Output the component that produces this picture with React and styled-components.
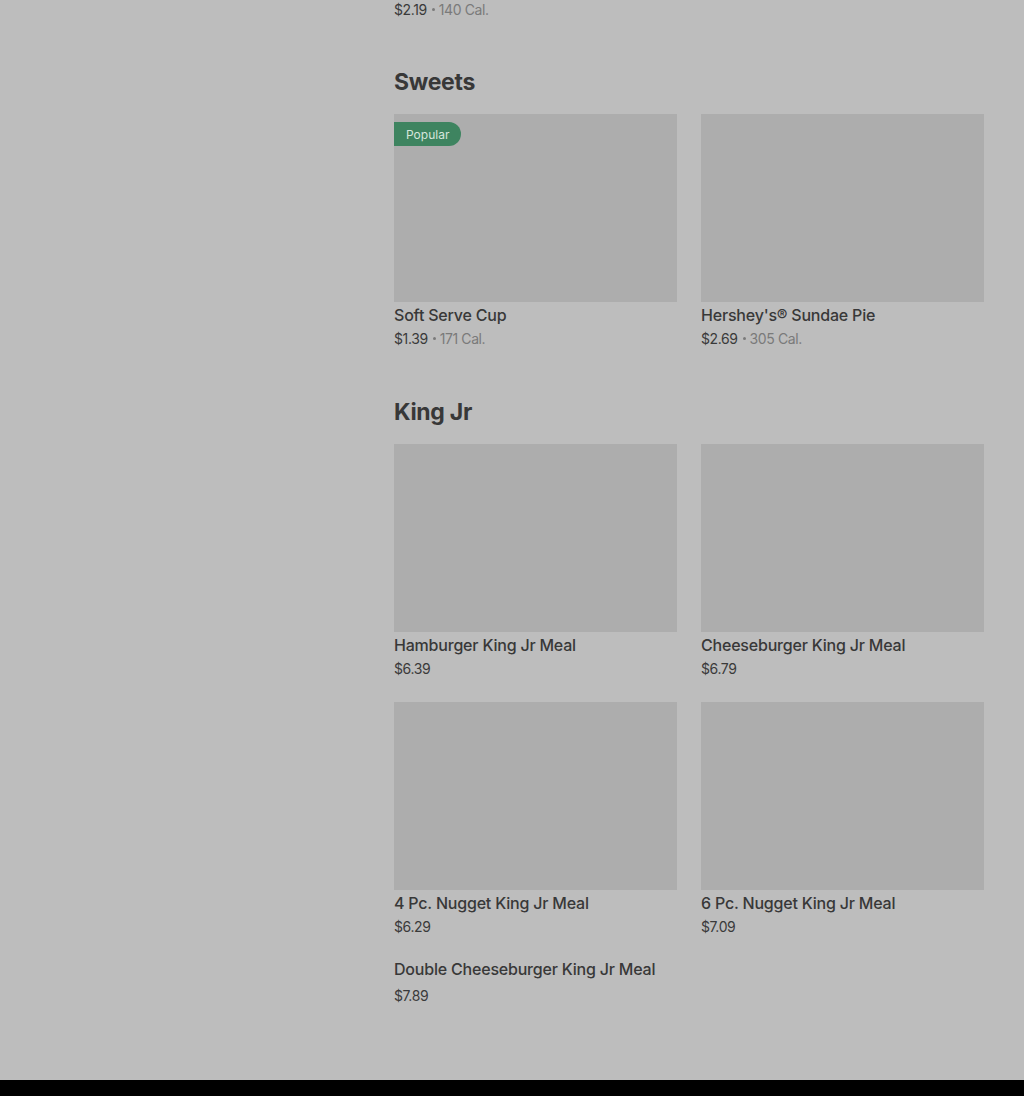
import React from "react";
import styled, { createGlobalStyle } from "styled-components";

const GlobalStyle = createGlobalStyle`
  html, body {
    margin: 0;
    padding: 0;
    background-color: #bdbdbd;
    font-family: "Inter", "Liberation Sans", sans-serif;
    color: #393939;
  }
  * {
    box-sizing: border-box;
  }
`;

const Page = styled.div`
  display: flex;
  flex-direction: column;
  min-height: 100vh;
  overflow: hidden;
`;

const Main = styled.div`
  display: grid;
  grid-template-columns: 394px 590px;
  padding-bottom: 73px;
`;

const Sidebar = styled.div``;

const Content = styled.div`
  display: flex;
  flex-direction: column;
  margin-top: -2px;
`;

const Section = styled.section`
  display: flex;
  flex-direction: column;
  margin-top: 45px;

  & + & {
    margin-top: 46px;
  }
`;

const Heading = styled.h2`
  margin: 0 0 16px 0;
  font-size: 23px;
  line-height: 32px;
  font-weight: 700;
  letter-spacing: -0.3px;
  color: #383838;
`;

const Grid = styled.div`
  display: grid;
  grid-template-columns: 283px 283px;
  column-gap: 24px;
  row-gap: 22px;
`;

const Card = styled.div`
  display: flex;
  flex-direction: column;
`;

const Image = styled.div`
  position: relative;
  height: 188px;
  background-color: #adadad;
`;

const Badge = styled.span`
  position: absolute;
  top: 8px;
  left: 0;
  height: 24px;
  padding: 0 12px;
  display: flex;
  align-items: center;
  border-radius: 0 12px 12px 0;
  background-color: #3e8460;
  color: #d6e6dc;
  font-size: 12px;
  font-weight: 400;
`;

const Title = styled.div`
  font-size: 16px;
  line-height: 24px;
  font-weight: 500;
  letter-spacing: -0.2px;
  color: #383838;
  margin-top: ${(p) => (p.$bare ? "-3px" : "1px")};
`;

const Meta = styled.div`
  font-size: 14px;
  line-height: 23px;
  letter-spacing: -0.4px;
  color: #3a3a3a;
  margin-top: ${(p) => (p.$bare ? "3px" : "0")};
`;

const Cal = styled.span`
  color: #7a7a7a;
`;

const Dot = styled.span`
  display: inline-block;
  width: 3px;
  height: 3px;
  margin: 0 4px 0 5px;
  border-radius: 50%;
  background-color: #7a7a7a;
  vertical-align: 4px;
`;

const Footer = styled.div`
  height: 24px;
  background-color: #000;
`;

const sections = [
  {
    name: "Sweets",
    items: [
      { title: "Soft Serve Cup", price: "$1.39", cal: "171 Cal.", popular: true },
      { title: "Hershey's® Sundae Pie", price: "$2.69", cal: "305 Cal." },
    ],
  },
  {
    name: "King Jr",
    items: [
      { title: "Hamburger King Jr Meal", price: "$6.39" },
      { title: "Cheeseburger King Jr Meal", price: "$6.79" },
      { title: "4 Pc. Nugget King Jr Meal", price: "$6.29" },
      { title: "6 Pc. Nugget King Jr Meal", price: "$7.09" },
      { title: "Double Cheeseburger King Jr Meal", price: "$7.89", bare: true },
    ],
  },
];

const Price = ({ price, cal, bare }) => (
  <Meta $bare={bare}>
    {price}
    {cal && (
      <>
        <Dot />
        <Cal>{cal}</Cal>
      </>
    )}
  </Meta>
);

const App = () => {
  return (
    <Page>
      <GlobalStyle />
      <Main>
        <Sidebar />
        <Content>
          <Price price="$2.19" cal="140 Cal." />
          {sections.map((s) => (
            <Section key={s.name}>
              <Heading>{s.name}</Heading>
              <Grid>
                {s.items.map((item) => (
                  <Card key={item.title}>
                    {!item.bare && (
                      <Image>{item.popular && <Badge>Popular</Badge>}</Image>
                    )}
                    <Title $bare={item.bare}>{item.title}</Title>
                    <Price price={item.price} cal={item.cal} bare={item.bare} />
                  </Card>
                ))}
              </Grid>
            </Section>
          ))}
        </Content>
      </Main>
      <Footer />
    </Page>
  );
};

export default App;
